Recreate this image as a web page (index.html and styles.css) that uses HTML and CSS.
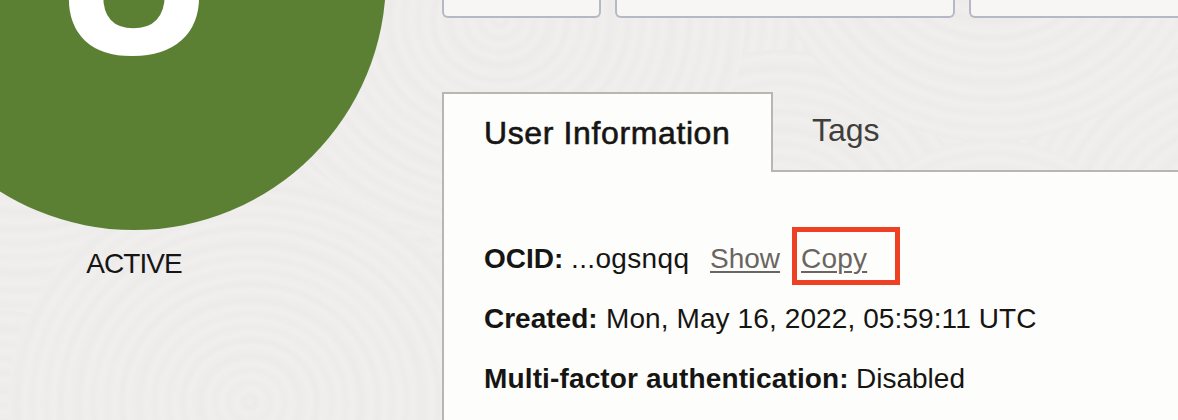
FILE: index.html
```
<!DOCTYPE html>
<html lang="en">
<head>
<meta charset="utf-8">
<title>User details</title>
<link rel="stylesheet" href="styles.css">
</head>
<body>
<svg class="texture" width="1178" height="420" aria-hidden="true">
  <defs>
    <radialGradient id="rings" gradientUnits="userSpaceOnUse" cx="0" cy="0" r="61" spreadMethod="repeat">
      <stop offset="0" stop-color="#f0efee"/><stop offset=".1" stop-color="#ecebea"/>
      <stop offset=".21" stop-color="#f0efee"/><stop offset=".34" stop-color="#edeceb"/>
      <stop offset=".46" stop-color="#f0efee"/><stop offset=".57" stop-color="#edeceb"/>
      <stop offset=".69" stop-color="#f0efee"/><stop offset=".81" stop-color="#ecebea"/>
      <stop offset="1" stop-color="#f0efee"/>
    </radialGradient>
  </defs>
  <g fill="url(#rings)">
    <circle r="280" transform="translate(20 40)"/>
    <circle r="230" transform="translate(400 70)"/>
    <circle r="300" transform="translate(1240 250)"/>
    <circle r="290" transform="translate(620 20)"/>
    <circle r="190" transform="translate(780 240)"/>
    <circle r="232" transform="translate(992 -90)"/>
    <circle r="170" transform="translate(992 310)"/>
    <circle r="245" transform="translate(500 20) scale(1 .9)"/>
    <circle r="130" transform="translate(0 440)"/>
    <circle r="242" transform="translate(250 402) scale(1 .92)"/>
  </g>
</svg>
<div class="page">
  <aside class="profile">
    <div class="avatar"><span class="initial">U</span></div>
    <div class="status">ACTIVE</div>
  </aside>
  <main class="content">
    <div class="actions">
      <div class="action action-small"></div>
      <div class="action action-wide"></div>
      <div class="action action-last"></div>
    </div>
    <nav class="tabs">
      <div class="tab tab-active"><span class="tab-title">User Information</span></div>
      <div class="tab tab-rest"><span class="tab-link">Tags</span></div>
    </nav>
    <section class="panel">
      <div class="row"><b class="k-ocid">OCID:</b><span class="ocid">...ogsnqq</span><a class="link show">Show</a><span class="highlight"><a class="link copy">Copy</a></span></div>
      <div class="row"><b class="k-created">Created:</b><span class="created">Mon, May 16, 2022, 05:59:11 UTC</span></div>
      <div class="row"><b class="k-mfa">Multi-factor authentication:</b><span class="mfa">Disabled</span></div>
    </section>
  </main>
</div>
</body>
</html>
```
FILE: styles.css
```
* { box-sizing: border-box; }
body {
  margin: 0;
  height: 420px;
  overflow: hidden;
  background: #efeeed;
  color: #161513;
  font-family: "Liberation Sans", Arial, sans-serif;
}
.texture { position: absolute; left: 0; top: 0; }
.page {
  position: relative;
  display: grid;
  grid-template-columns: 442px 736px;
  height: 420px;
  overflow: hidden;
}
.profile { display: flex; flex-direction: column; min-width: 0; }
.avatar {
  flex: none;
  width: 504px;
  height: 504px;
  margin: -274px 0 0 -118px;
  border-radius: 50%;
  background: #5c8033;
  display: flex;
  align-items: center;
  justify-content: center;
}
.initial {
  padding-top: 4px;
  color: #fff;
  font-weight: bold;
  font-size: 210px;
  line-height: 248px;
  -webkit-text-stroke: 4px #fff;
}
.status {
  width: 268px;
  margin-top: 18px;
  text-align: center;
  font-size: 28px;
  line-height: 32px;
  letter-spacing: -.9px;
}
.content { display: flex; flex-direction: column; height: 420px; }
.actions { display: flex; gap: 14px; height: 18px; }
.action {
  flex: none;
  border: 2px solid #b5b9c4;
  border-top: 0;
  border-radius: 0 0 6px 6px;
  background: #f7f6f4;
}
.action-small { width: 159px; }
.action-wide { width: 340px; }
.action-last { width: 240px; }
.tabs { display: flex; height: 80px; margin-top: 74px; }
.tab-active {
  width: 331px;
  padding: 21px 0 0 40px;
  border: 2px solid #bbb5b0;
  border-bottom: 0;
  background: #fdfdfb;
}
.tab-rest { flex: 1; padding: 20px 0 0 39px; border-bottom: 2px solid #bbb5b0; }
.tab-title, .tab-link { font-size: 32px; line-height: 36px; white-space: nowrap; }
.tab-title { letter-spacing: .62px; -webkit-text-stroke: .6px #161513; }
.tab-link { color: #403e3b; }
.panel {
  flex: 1;
  padding: 57px 0 0 40px;
  border-left: 2px solid #bbb5b0;
  background: #fdfdfb;
}
.row {
  display: flex;
  align-items: center;
  height: 60px;
  font-size: 28px;
  line-height: 32px;
  white-space: nowrap;
}
.row b { flex: none; }
.k-ocid { width: 87px; }
.ocid { width: 139px; letter-spacing: .35px; }
.show { width: 82px; }
.k-created { width: 122px; }
.created { letter-spacing: .1px; }
.k-mfa { width: 372px; letter-spacing: .14px; }
.link { color: #6b6560; text-decoration: underline; text-decoration-thickness: 2px; text-underline-offset: 3px; }
.copy { letter-spacing: .2px; }
.highlight {
  width: 108px;
  height: 58px;
  margin-top: -6px;
  padding: 11px 0 0 4px;
  border: 5px solid #ee4023;
}
```
